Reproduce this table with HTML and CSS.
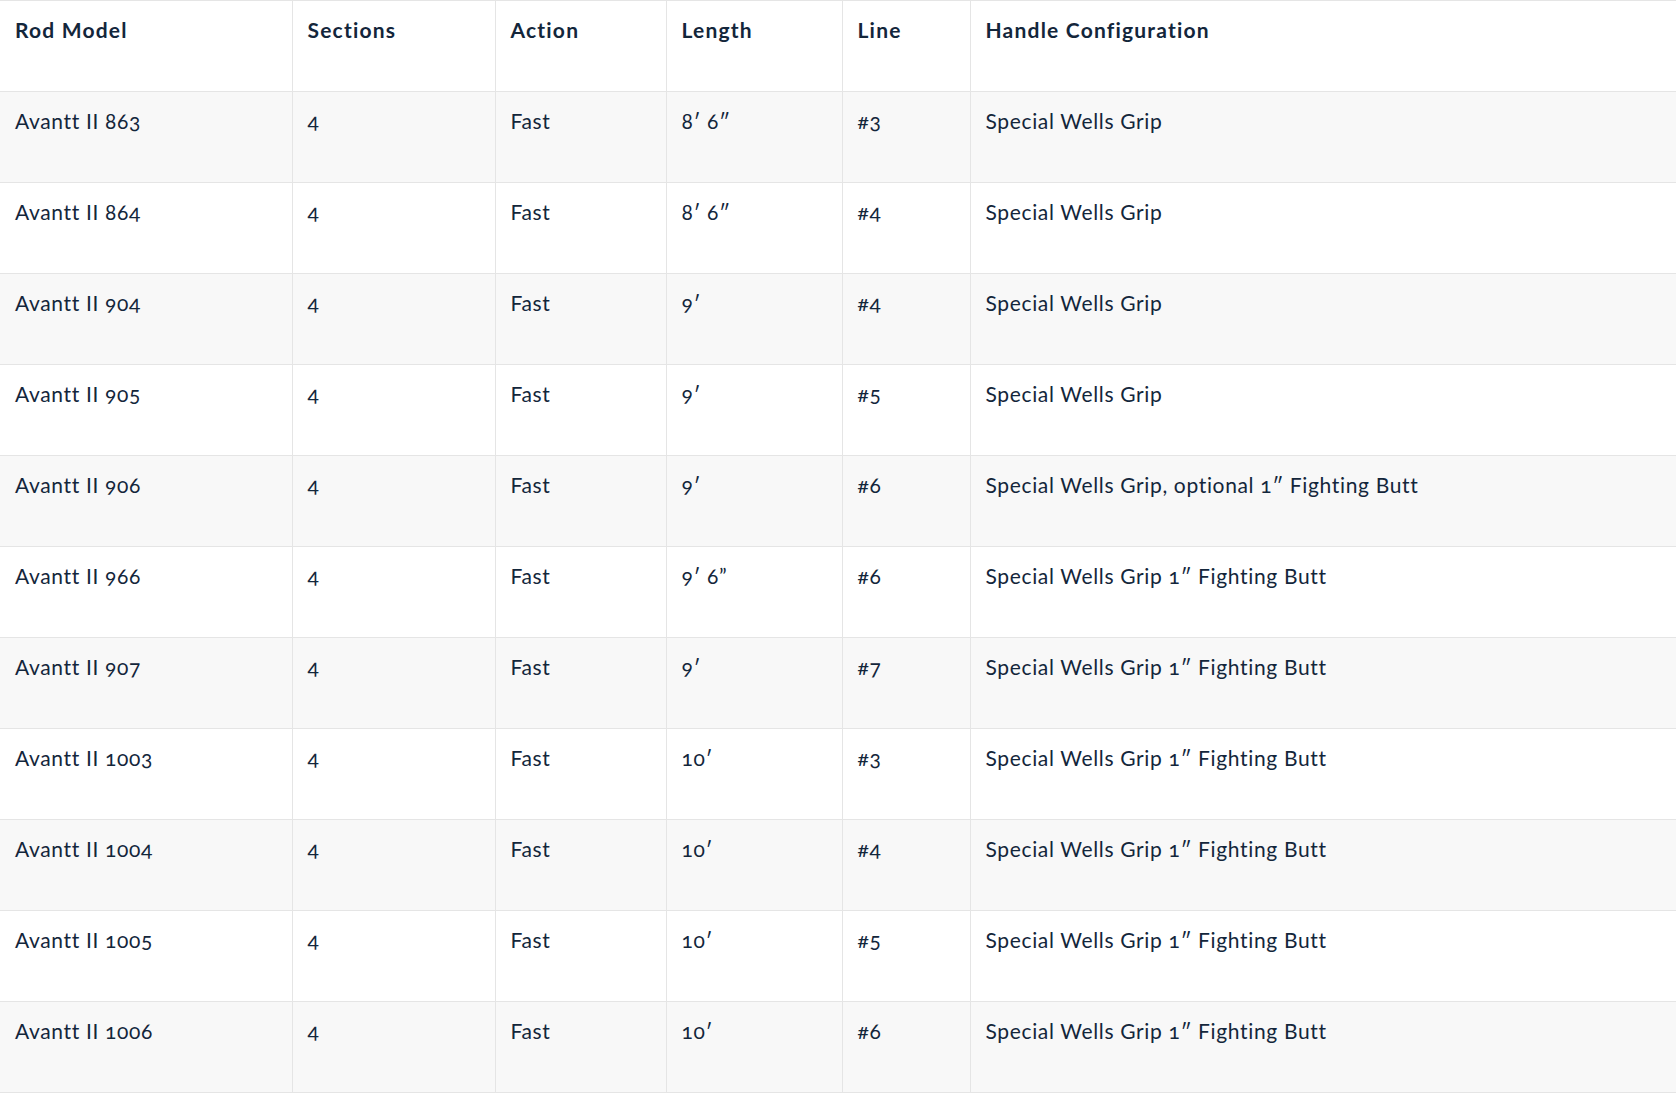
FILE: index.html
```html
<!DOCTYPE html>
<html lang="en">
<head>
<meta charset="utf-8">
<title>Avantt II Specifications</title>
<link rel="stylesheet" href="styles.css">
</head>
<body>
<table class="spec-table">
  <colgroup>
    <col class="c-model">
    <col class="c-sections">
    <col class="c-action">
    <col class="c-length">
    <col class="c-line">
    <col class="c-handle">
  </colgroup>
  <thead>
    <tr>
      <th>Rod Model</th>
      <th>Sections</th>
      <th>Action</th>
      <th>Length</th>
      <th>Line</th>
      <th>Handle Configuration</th>
    </tr>
  </thead>
  <tbody>
    <tr><td>Avantt II 863</td><td>4</td><td>Fast</td><td>8′ 6″</td><td>#3</td><td>Special Wells Grip</td></tr>
    <tr><td>Avantt II 864</td><td>4</td><td>Fast</td><td>8′ 6″</td><td>#4</td><td>Special Wells Grip</td></tr>
    <tr><td>Avantt II 904</td><td>4</td><td>Fast</td><td>9′</td><td>#4</td><td>Special Wells Grip</td></tr>
    <tr><td>Avantt II 905</td><td>4</td><td>Fast</td><td>9′</td><td>#5</td><td>Special Wells Grip</td></tr>
    <tr><td>Avantt II 906</td><td>4</td><td>Fast</td><td>9′</td><td>#6</td><td>Special Wells Grip, optional 1″ Fighting Butt</td></tr>
    <tr><td>Avantt II 966</td><td>4</td><td>Fast</td><td>9′ 6”</td><td>#6</td><td>Special Wells Grip 1″ Fighting Butt</td></tr>
    <tr><td>Avantt II 907</td><td>4</td><td>Fast</td><td>9′</td><td>#7</td><td>Special Wells Grip 1″ Fighting Butt</td></tr>
    <tr><td>Avantt II 1003</td><td>4</td><td>Fast</td><td>10′</td><td>#3</td><td>Special Wells Grip 1″ Fighting Butt</td></tr>
    <tr><td>Avantt II 1004</td><td>4</td><td>Fast</td><td>10′</td><td>#4</td><td>Special Wells Grip 1″ Fighting Butt</td></tr>
    <tr><td>Avantt II 1005</td><td>4</td><td>Fast</td><td>10′</td><td>#5</td><td>Special Wells Grip 1″ Fighting Butt</td></tr>
    <tr><td>Avantt II 1006</td><td>4</td><td>Fast</td><td>10′</td><td>#6</td><td>Special Wells Grip 1″ Fighting Butt</td></tr>
  </tbody>
</table>
</body>
</html>
```

FILE: styles.css
```css
html, body {
  margin: 0;
  padding: 0;
  background: #ffffff;
}

body {
  font-family: Lato, "Open Sans", "Liberation Sans", sans-serif;
  color: #13263b;
  font-variant-numeric: oldstyle-nums;
}

.spec-table {
  width: 100%;
  border-collapse: collapse;
  table-layout: fixed;
  border-top: 1px solid #e5e5e5;
  border-bottom: 1px solid #e5e5e5;
}

.c-model { width: 292px; }
.c-sections { width: 203px; }
.c-action { width: 171px; }
.c-length { width: 176px; }
.c-line { width: 128px; }

.spec-table th,
.spec-table td {
  text-align: left;
  vertical-align: top;
  height: 91px;
  box-sizing: border-box;
  padding: 14px 15px 0;
  font-size: 21px;
  line-height: 30px;
  border-left: 1px solid #e5e5e5;
  border-bottom: 1px solid #e5e5e5;
}

.spec-table th:first-child,
.spec-table td:first-child {
  border-left: none;
}

.spec-table th {
  font-weight: 700;
  letter-spacing: 1.2px;
}

.spec-table td {
  font-weight: 400;
  letter-spacing: 0.65px;
}

.spec-table tbody tr:nth-child(odd) {
  background: #f8f8f8;
}
```
